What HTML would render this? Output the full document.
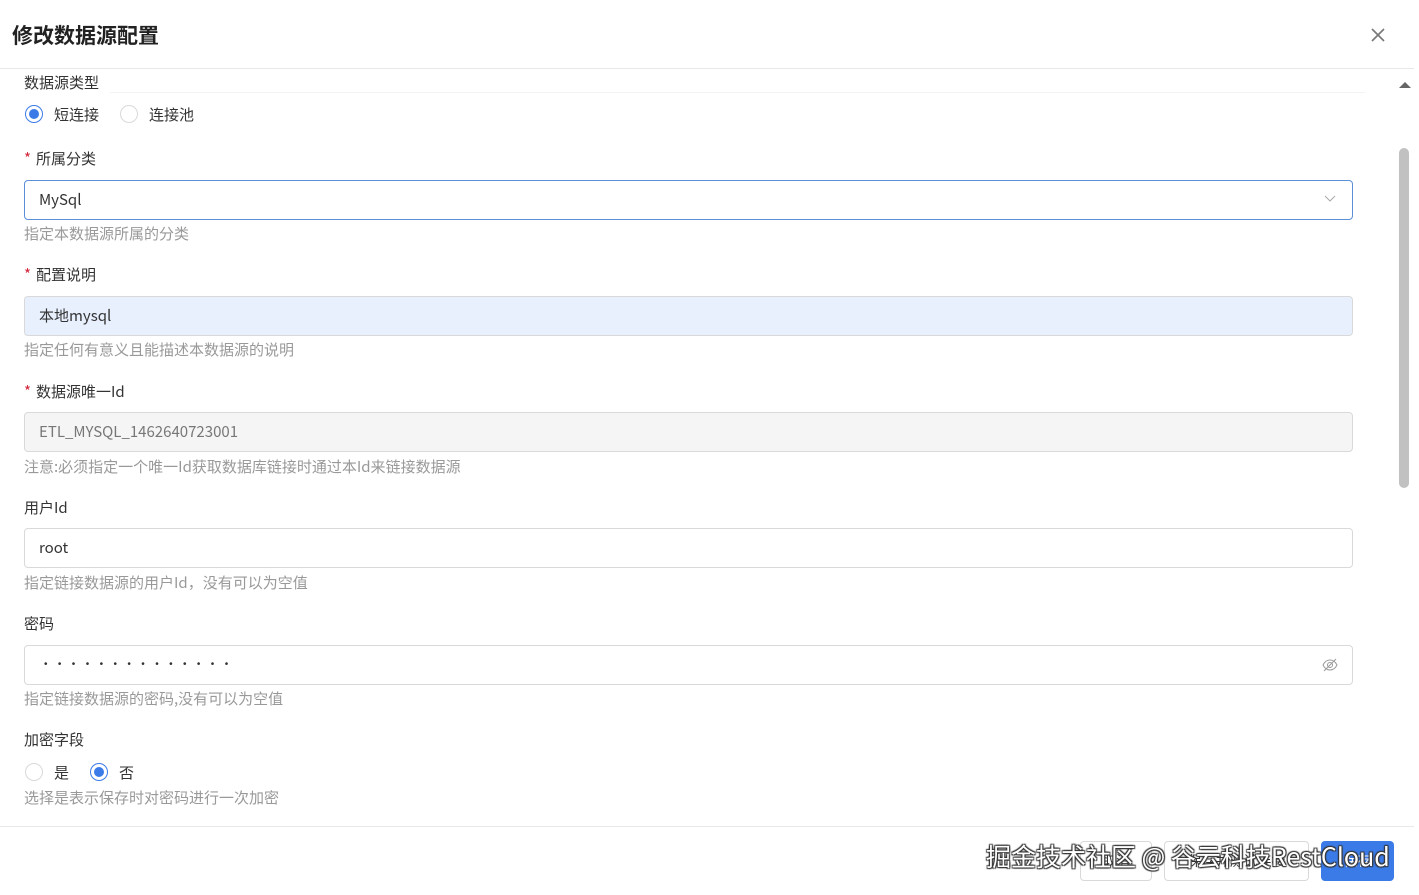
<!DOCTYPE html>
<html><head><meta charset="utf-8"><style>
*{box-sizing:border-box;margin:0;padding:0}
body{width:1419px;height:895px;overflow:hidden;background:#fff;font-family:"Noto Sans CJK SC","Liberation Sans",sans-serif;color:#333;font-size:15px;position:relative}
.hdr{position:absolute;left:0;top:0;width:1414px;height:69px;border-bottom:1px solid #e8e8e8}
.hdr h1{position:absolute;left:12px;top:21px;font-size:21px;font-weight:bold;color:#222;line-height:28px}
.close{position:absolute;left:1370px;top:27px;width:16px;height:16px}
.lbl{position:absolute;left:24px;font-size:15px;color:#333;line-height:20px}
.lbl .s{color:#d4263a;margin-right:5px}
.hint{position:absolute;left:24px;font-size:15px;color:#999;line-height:20px}
.inp{position:absolute;left:24px;width:1329px;height:40px;border:1px solid #d9d9d9;border-radius:4px;padding-left:14px;line-height:38px;font-size:15px;color:#333}
.radio{position:absolute;width:18px;height:18px;border:1px solid #d9d9d9;border-radius:50%;background:#fff}
.radio.on{border-color:#3b7be8}
.radio.on:after{content:"";position:absolute;left:3px;top:3px;width:10px;height:10px;border-radius:50%;background:#3b7be8}
.rt{position:absolute;font-size:15px;color:#333;line-height:20px}
.foot{position:absolute;left:0;top:826px;width:1414px;height:69px;border-top:1px solid #e8e8e8}
.btn{position:absolute;top:841px;height:40px;border:1px solid #d9d9d9;border-radius:4px;background:#fff;text-align:center;line-height:38px;font-size:14px;color:#333}
.wm{position:absolute;left:986px;top:838px;font-size:25px;line-height:36px;color:#fff;text-shadow:1px 1px 1px #333,-1px -1px 1px #333,1px -1px 1px #333,-1px 1px 1px #333;white-space:nowrap}
.sb{position:absolute;left:1399px;top:148px;width:10px;height:340px;background:#c1c1c1;border-radius:5px}
</style></head><body>
<div class="hdr"><h1>修改数据源配置</h1>
<svg class="close" viewBox="0 0 16 16"><path d="M2 2L14 14M14 2L2 14" stroke="#777" stroke-width="1.6"/></svg></div>
<svg style="position:absolute;left:1398px;top:80px" width="14" height="10"><path d="M1 8L7 2L13 8Z" fill="#666"/></svg>
<div class="sb"></div>
<div class="lbl" style="top:73px">数据源类型</div>
<div style="position:absolute;left:110px;top:92px;width:1255px;border-top:1px solid #f3f3f3"></div>
<div class="radio on" style="left:25px;top:105px"></div><div class="rt" style="left:54px;top:105px">短连接</div>
<div class="radio" style="left:120px;top:105px"></div><div class="rt" style="left:149px;top:105px">连接池</div>
<div class="lbl" style="top:149px"><span class="s">*</span>所属分类</div>
<div class="inp" style="top:180px;border-color:#5b8fd6">MySql
<svg style="position:absolute;right:16px;top:14px" width="12" height="8"><path d="M1 1L6 6L11 1" stroke="#aaa" fill="none"/></svg></div>
<div class="hint" style="top:224px">指定本数据源所属的分类</div>
<div class="lbl" style="top:265px"><span class="s">*</span>配置说明</div>
<div class="inp" style="top:296px;background:#e8f0fe">本地mysql</div>
<div class="hint" style="top:340px">指定任何有意义且能描述本数据源的说明</div>
<div class="lbl" style="top:382px"><span class="s">*</span>数据源唯一Id</div>
<div class="inp" style="top:412px;background:#f5f5f5;color:#777">ETL_MYSQL_1462640723001</div>
<div class="hint" style="top:457px">注意:必须指定一个唯一Id获取数据库链接时通过本Id来链接数据源</div>
<div class="lbl" style="top:498px">用户Id</div>
<div class="inp" style="top:528px">root</div>
<div class="hint" style="top:573px">指定链接数据源的用户Id，没有可以为空值</div>
<div class="lbl" style="top:614px">密码</div>
<div class="inp" style="top:645px;padding-left:19px;letter-spacing:10.4px;font-size:10px;font-family:'Liberation Sans',sans-serif">&#8226;&#8226;&#8226;&#8226;&#8226;&#8226;&#8226;&#8226;&#8226;&#8226;&#8226;&#8226;&#8226;&#8226;
<svg style="position:absolute;right:14px;top:12px" width="16" height="14" viewBox="0 0 16 14"><path d="M1 7C3 3 6 2 8 2S13 3 15 7C13 11 10 12 8 12S3 11 1 7Z" stroke="#999" fill="none"/><circle cx="8" cy="7" r="2.5" stroke="#999" fill="none"/><path d="M2 13L14 1" stroke="#999"/></svg></div>
<div class="hint" style="top:689px">指定链接数据源的密码,没有可以为空值</div>
<div class="lbl" style="top:730px">加密字段</div>
<div class="radio" style="left:25px;top:763px"></div><div class="rt" style="left:54px;top:763px">是</div>
<div class="radio on" style="left:90px;top:763px"></div><div class="rt" style="left:119px;top:763px">否</div>
<div class="hint" style="top:788px">选择是表示保存时对密码进行一次加密</div>
<div class="foot"></div>
<div class="btn" style="left:1080px;width:72px">取消</div>
<div class="btn" style="left:1164px;width:145px">保存并测试连接</div>
<div class="btn" style="left:1321px;width:73px;background:#3b7be8;border-color:#3b7be8;color:#fff">保存</div>
<div class="wm">掘金技术社区 @ 谷云科技RestCloud</div>
</body></html>
